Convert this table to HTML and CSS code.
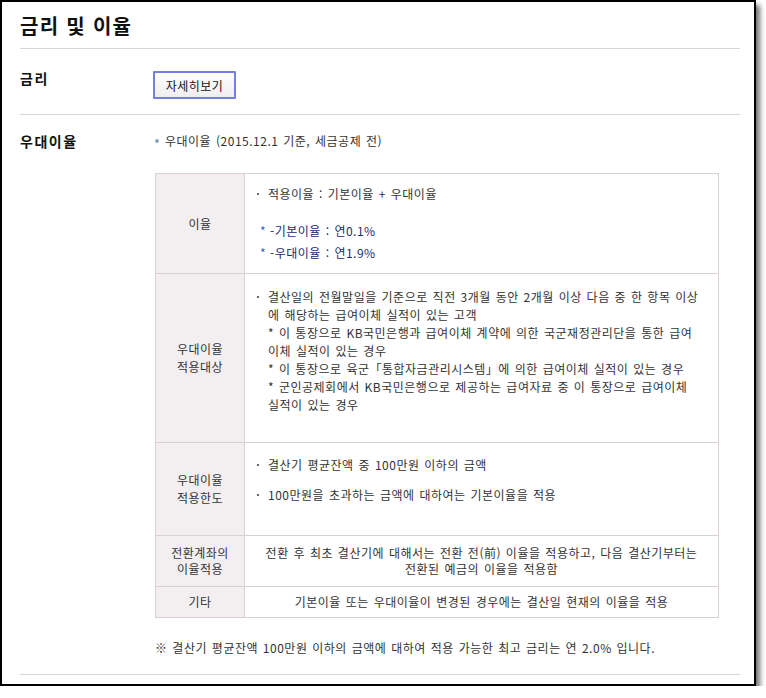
FILE: index.html
```html
<!DOCTYPE html>
<html lang="ko">
<head>
<meta charset="utf-8">
<title>금리 및 이율</title>
<link rel="stylesheet" href="styles.css">
</head>
<body>
<div class="frame">
  <h1 class="title">금리 및 이율</h1>
  <div class="row row-rate">
    <div class="label">금리</div>
    <div class="value"><button class="btn" type="button">자세히보기</button></div>
  </div>
  <div class="row row-pref">
    <div class="label">우대이율</div>
    <div class="value">
      <p class="dot-item">우대이율 (2015.12.1 기준, 세금공제 전)</p>
      <table class="info">
        <colgroup><col class="c-head"><col></colgroup>
        <tr class="r1">
          <th>이율</th>
          <td>
            <p class="bl first">적용이율 : 기본이율 + 우대이율</p>
            <ul class="blue">
              <li>-기본이율 : 연0.1%</li>
              <li>-우대이율 : 연1.9%</li>
            </ul>
          </td>
        </tr>
        <tr class="r2">
          <th>우대이율<br>적용대상</th>
          <td>
            <p class="bl">결산일의 전월말일을 기준으로 직전 3개월 동안 2개월 이상 다음 중 한 항목 이상<br>에 해당하는 급여이체 실적이 있는 고객<br>* 이 통장으로 KB국민은행과 급여이체 계약에 의한 국군재정관리단을 통한 급여<br>이체 실적이 있는 경우<br>* 이 통장으로 육군「통합자금관리시스템」에 의한 급여이체 실적이 있는 경우<br>* 군인공제회에서 KB국민은행으로 제공하는 급여자료 중 이 통장으로 급여이체<br>실적이 있는 경우</p>
          </td>
        </tr>
        <tr class="r3">
          <th>우대이율<br>적용한도</th>
          <td>
            <p class="bl">결산기 평균잔액 중 100만원 이하의 금액</p>
            <p class="bl second">100만원을 초과하는 금액에 대하여는 기본이율을 적용</p>
          </td>
        </tr>
        <tr class="r4">
          <th>전환계좌의<br>이율적용</th>
          <td class="center">전환 후 최초 결산기에 대해서는 전환 전(前) 이율을 적용하고, 다음 결산기부터는<br>전환된 예금의 이율을 적용함</td>
        </tr>
        <tr class="r5">
          <th>기타</th>
          <td class="center">기본이율 또는 우대이율이 변경된 경우에는 결산일 현재의 이율을 적용</td>
        </tr>
      </table>
      <p class="note">※ 결산기 평균잔액 100만원 이하의 금액에 대하여 적용 가능한 최고 금리는 연 2.0% 입니다.</p>
    </div>
  </div>
</div>
</body>
</html>
```

FILE: styles.css
```css
html, body {
  margin: 0;
  padding: 0;
  background: #ffffff;
}

body {
  font-family: "Noto Sans CJK KR", "Noto Sans", sans-serif;
  color: #333333;
  font-size: 12px;
  letter-spacing: 0.5px;
}

.frame {
  box-sizing: border-box;
  width: 756px;
  height: 686px;
  border: 2px solid #000000;
  box-shadow: 4px 5px 5px rgba(0, 0, 0, 0.55);
  padding: 0 14px 0 18px;
  background: #ffffff;
}

.title {
  margin: 0;
  padding-top: 2px;
  height: 44px;
  line-height: 44px;
  font-size: 20px;
  font-weight: bold;
  letter-spacing: 1.3px;
  color: #111111;
  border-bottom: 1px solid #dcd2d6;
}

.row {
  display: grid;
  grid-template-columns: 133px 1fr;
  align-items: start;
  border-bottom: 1px solid #dcd2d6;
}

.label {
  font-size: 14px;
  font-weight: bold;
  line-height: 18px;
  letter-spacing: 1.5px;
  color: #111111;
}

.row-rate {
  padding: 20px 0 15px;
}

.btn {
  display: block;
  margin: 2px 0 0;
  box-sizing: border-box;
  width: 83px;
  height: 28px;
  padding: 0;
  border: 2px solid #7280e4;
  border-radius: 1px;
  background: linear-gradient(#ffffff, #eeeeee);
  font-family: inherit;
  font-size: 12px;
  letter-spacing: 0.5px;
  color: #111111;
}

.row-pref {
  padding: 17px 0 17px;
}

.dot-item {
  margin: 0 0 0 2px;
  line-height: 18px;
  word-spacing: 1px;
}

.dot-item::before {
  content: "";
  display: inline-block;
  width: 4px;
  height: 4px;
  border-radius: 50%;
  background: #8fa4c4;
  margin-right: 6px;
  vertical-align: 3px;
}

.info {
  margin: 23px 0 0 2px;
  width: 564px;
  border-collapse: collapse;
  table-layout: fixed;
  border: 1px solid #d9cfd4;
}

.c-head {
  width: 89px;
}

.info th,
.info td {
  border: 1px solid #d9cfd4;
  font-size: 12px;
  line-height: 18px;
  word-spacing: 1px;
}

.info th {
  background: #f3eff1;
  font-weight: normal;
  text-align: center;
  vertical-align: middle;
  color: #333333;
  padding: 0;
}

.info td {
  vertical-align: top;
  padding: 0 10px 0 12px;
  color: #333333;
}

.info td.center {
  text-align: center;
  vertical-align: middle;
  padding: 0 2px;
}

.r1 { height: 100px; }
.r2 { height: 169px; }
.r3 { height: 93px; }
.r4 { height: 51px; }
.r5 { height: 31px; }

.r1 td { padding-top: 11px; }
.r2 td { padding-top: 14px; }
.r3 td { padding-top: 13px; }
.r4 th, .r4 td { line-height: 16px; }

.bl {
  margin: 0;
  padding-left: 11px;
  text-indent: -11px;
}

.bl::before {
  content: "";
  display: inline-block;
  width: 2px;
  height: 2px;
  background: #666666;
  margin-right: 9px;
  vertical-align: 4px;
  text-indent: 0;
}

.bl.first {
  margin-bottom: 17px;
}

.bl.second {
  margin-top: 12px;
}

.blue {
  list-style: none;
  margin: 0;
  padding: 0 0 0 3px;
  color: #1d2a6e;
}

.blue li {
  line-height: 22px;
}

.blue li::before {
  content: "*";
  display: inline-block;
  width: 10px;
  color: #3b5fd0;
  font-size: 12px;
}

.note {
  margin: 21px 0 0 2px;
  line-height: 18px;
  word-spacing: 1px;
}
```
